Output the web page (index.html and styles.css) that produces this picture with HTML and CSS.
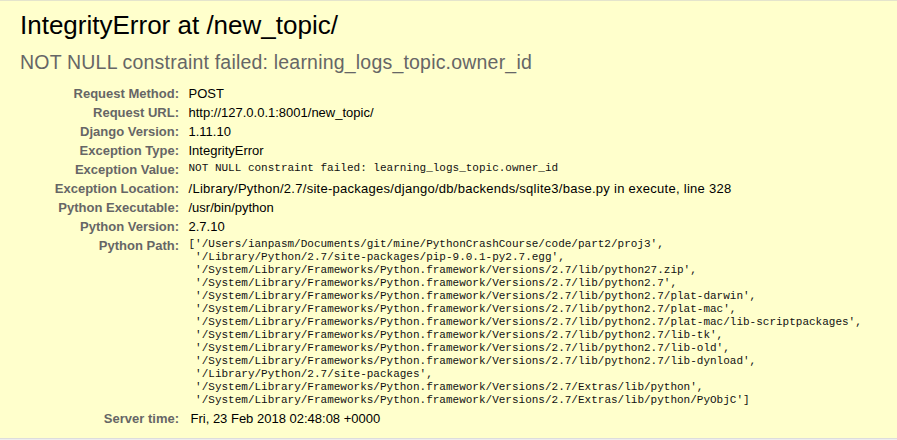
FILE: index.html
```html
<!DOCTYPE html>
<html lang="en">
<head>
<meta charset="utf-8">
<title>IntegrityError at /new_topic/</title>
<link rel="stylesheet" href="styles.css">
</head>
<body>
<div id="summary" class="summary">
  <h1 class="title">IntegrityError at /new_topic/</h1>
  <pre class="exception-value">NOT NULL constraint failed: learning_logs_topic.owner_id</pre>
  <table class="meta">
    <tbody>
      <tr><th class="key">Request Method:</th><td class="val">POST</td></tr>
      <tr><th class="key">Request URL:</th><td class="val">http://127.0.0.1:8001/new_topic/</td></tr>
      <tr><th class="key">Django Version:</th><td class="val">1.11.10</td></tr>
      <tr><th class="key">Exception Type:</th><td class="val">IntegrityError</td></tr>
      <tr><th class="key">Exception Value:</th><td class="val"><pre class="mono">NOT NULL constraint failed: learning_logs_topic.owner_id</pre></td></tr>
      <tr><th class="key">Exception Location:</th><td class="val val-wide">/Library/Python/2.7/site-packages/django/db/backends/sqlite3/base.py in execute, line 328</td></tr>
      <tr><th class="key">Python Executable:</th><td class="val">/usr/bin/python</td></tr>
      <tr><th class="key">Python Version:</th><td class="val">2.7.10</td></tr>
      <tr><th class="key">Python Path:</th><td class="val"><pre class="mono">['/Users/ianpasm/Documents/git/mine/PythonCrashCourse/code/part2/proj3',
 '/Library/Python/2.7/site-packages/pip-9.0.1-py2.7.egg',
 '/System/Library/Frameworks/Python.framework/Versions/2.7/lib/python27.zip',
 '/System/Library/Frameworks/Python.framework/Versions/2.7/lib/python2.7',
 '/System/Library/Frameworks/Python.framework/Versions/2.7/lib/python2.7/plat-darwin',
 '/System/Library/Frameworks/Python.framework/Versions/2.7/lib/python2.7/plat-mac',
 '/System/Library/Frameworks/Python.framework/Versions/2.7/lib/python2.7/plat-mac/lib-scriptpackages',
 '/System/Library/Frameworks/Python.framework/Versions/2.7/lib/python2.7/lib-tk',
 '/System/Library/Frameworks/Python.framework/Versions/2.7/lib/python2.7/lib-old',
 '/System/Library/Frameworks/Python.framework/Versions/2.7/lib/python2.7/lib-dynload',
 '/Library/Python/2.7/site-packages',
 '/System/Library/Frameworks/Python.framework/Versions/2.7/Extras/lib/python',
 '/System/Library/Frameworks/Python.framework/Versions/2.7/Extras/lib/python/PyObjC']</pre></td></tr>
      <tr><th class="key">Server time:</th><td class="val val-time">Fri, 23 Feb 2018 02:48:08 +0000</td></tr>
    </tbody>
  </table>
</div>
<div class="rest"></div>
</body>
</html>
```

FILE: styles.css
```css
html, body {
  margin: 0;
  padding: 0;
}
body {
  font: 13px "Liberation Sans", Arial, Helvetica, sans-serif;
  color: #000;
  background: #eeeeee;
}
.summary {
  background: #ffffcc;
  padding: 9px 20px 10px;
  border-top: 1px solid #e4e4cc;
  border-bottom: 1px solid #dddddd;
}
.title {
  margin: 0;
  font-size: 26px;
  font-weight: normal;
}
.exception-value {
  font-family: "Liberation Sans", Arial, Helvetica, sans-serif;
  color: #666666;
  font-size: 19.5px;
  letter-spacing: 0.2px;
  margin: 10px 0;
  white-space: pre-wrap;
}
.meta {
  border: none;
  border-collapse: collapse;
  width: 100%;
  background: transparent;
}
.key {
  width: 156px;
  text-align: right;
  color: #666666;
  font-weight: bold;
  vertical-align: top;
  padding: 2px 6.5px 2px 3px;
}
.val {
  vertical-align: top;
  padding: 2px 3px;
}
.val-wide {
  letter-spacing: 0.27px;
}
.val-time {
  padding-left: 5px;
}
.mono {
  margin: 0;
  font-family: "Liberation Mono", "Courier New", monospace;
  font-size: 11px;
  line-height: 13px;
  color: #111;
  white-space: pre-wrap;
}
.rest {
  height: 20px;
}
```
